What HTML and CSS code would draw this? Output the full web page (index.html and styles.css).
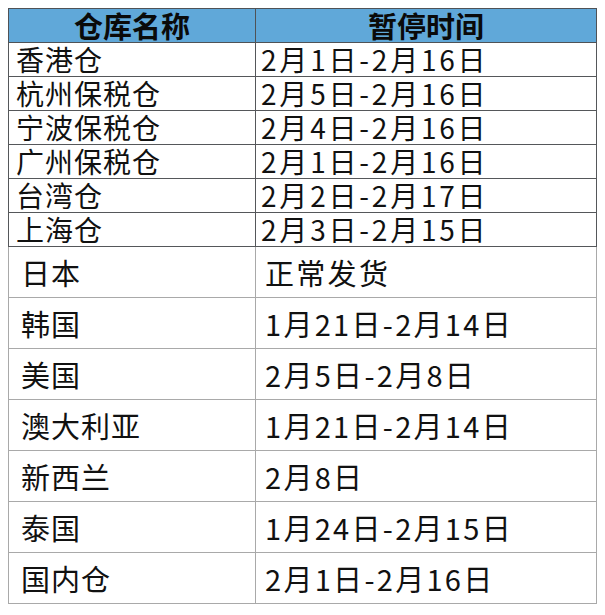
FILE: index.html
```html
<!DOCTYPE html>
<html lang="zh">
<head>
<meta charset="utf-8">
<title>暂停时间</title>
<link rel="stylesheet" href="styles.css">
</head>
<body>
<table class="sched">
  <thead>
    <tr class="head"><th class="c1">仓库名称</th><th class="c2">暂停时间</th></tr>
  </thead>
  <tbody>
    <tr class="top"><td class="c1">香港仓</td><td class="c2">2月1日-2月16日</td></tr>
    <tr class="top"><td class="c1">杭州保税仓</td><td class="c2">2月5日-2月16日</td></tr>
    <tr class="top"><td class="c1">宁波保税仓</td><td class="c2">2月4日-2月16日</td></tr>
    <tr class="top"><td class="c1">广州保税仓</td><td class="c2">2月1日-2月16日</td></tr>
    <tr class="top"><td class="c1">台湾仓</td><td class="c2">2月2日-2月17日</td></tr>
    <tr class="top"><td class="c1">上海仓</td><td class="c2">2月3日-2月15日</td></tr>
    <tr class="low"><td class="c1">日本</td><td class="c2">正常发货</td></tr>
    <tr class="low"><td class="c1">韩国</td><td class="c2">1月21日-2月14日</td></tr>
    <tr class="low"><td class="c1">美国</td><td class="c2">2月5日-2月8日</td></tr>
    <tr class="low"><td class="c1">澳大利亚</td><td class="c2">1月21日-2月14日</td></tr>
    <tr class="low"><td class="c1">新西兰</td><td class="c2">2月8日</td></tr>
    <tr class="low"><td class="c1">泰国</td><td class="c2">1月24日-2月15日</td></tr>
    <tr class="low"><td class="c1">国内仓</td><td class="c2">2月1日-2月16日</td></tr>
  </tbody>
</table>
</body>
</html>
```
FILE: styles.css
```css
html, body {
  margin: 0;
  padding: 0;
  background: #ffffff;
}
body {
  padding: 8px 0 0 8px;
  font-family: "Noto Sans CJK SC", "Noto Sans", sans-serif;
  color: #111111;
}
.sched {
  border-collapse: collapse;
  width: 589px;
  table-layout: fixed;
}
.sched th, .sched td {
  padding: 0;
  white-space: nowrap;
}
.sched .c1 { width: 246px; }
.head th {
  height: 33px;
  background: #60a8d9;
  font-size: 29px;
  line-height: 33px;
  font-weight: 700;
  text-align: center;
  color: #0a0a0a;
  border: 1px solid #4f5256;
}
.top td {
  height: 33px;
  font-size: 28px;
  line-height: 33px;
  letter-spacing: 1px;
  border: 1px solid #55575a;
  text-align: left;
}
.top .c1 { padding-left: 7px; }
.top .c2 { padding-left: 5px; letter-spacing: 2.8px; }
.low td {
  height: 50px;
  font-size: 29px;
  line-height: 50px;
  letter-spacing: 1px;
  border: 1px solid #a9a9a9;
  text-align: left;
}
.low .c1 { padding-left: 12px; }
.low .c2 { padding-left: 9px; letter-spacing: 2.3px; }
```
